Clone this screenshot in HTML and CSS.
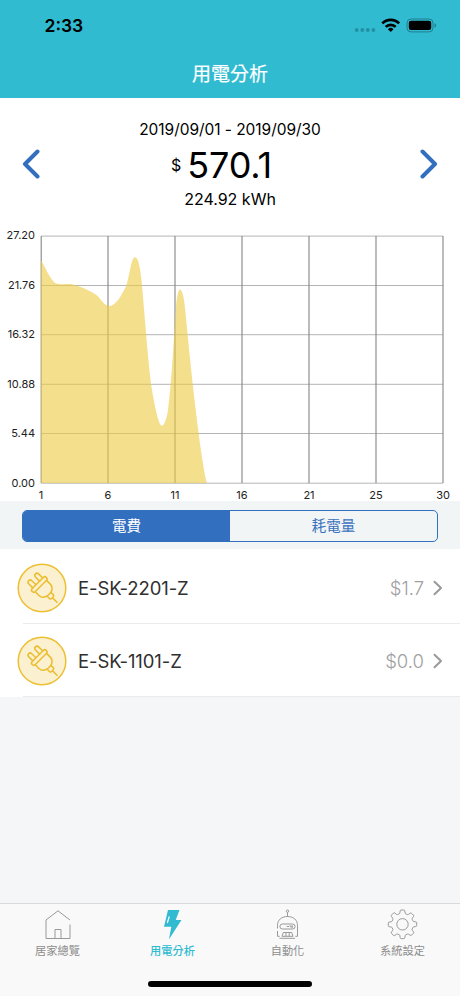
FILE: index.html
```html
<!DOCTYPE html>
<html lang="zh-Hant">
<head>
<meta charset="utf-8">
<title>用電分析</title>
<link rel="stylesheet" href="styles.css">
</head>
<body>
<svg class="defs" aria-hidden="true">
  <symbol id="plug" viewBox="0 0 50 50">
    <circle cx="25" cy="25" r="23.800" fill="#fbf1d0" stroke="#edbf33" stroke-width="1.500"/>
    <g fill="none" stroke="#ebbd2f" stroke-width="1.500" stroke-linejoin="round" stroke-linecap="round" transform="translate(22.300 21.500) rotate(-45)">
      <rect x="-10" y="-2.200" width="20" height="4.400" rx="2.200"/>
      <path d="M-7-2.200V-8a2.200 2.200 0 0 1 4.400 0V-2.200M2.600-2.200V-8A2.200 2.200 0 0 1 7-8V-2.200"/>
      <path d="M-8 2.200V7.500C-8 11-5 13.500-2.400 13.800H2.400C5 13.500 8 11 8 7.500V2.200"/>
      <path d="M-2.700 13.800v3.200q0 1.600 1.500 1.600h2.400q1.500 0 1.500-1.600V13.800M0 18.600V25"/>
    </g>
  </symbol>
</svg>
<div class="screen">
  <header class="header">
    <div class="status">
      <span class="time">2:33</span>
      <svg class="status-icons" width="84" height="18" viewBox="0 0 84 18">
        <g fill="#2390a2"><circle cx="2.700" cy="14" r="1.900"/><circle cx="8.300" cy="14" r="1.900"/><circle cx="13.800" cy="14" r="1.900"/><circle cx="19.400" cy="14" r="1.900"/></g>
        <g fill="none" stroke="#000" stroke-width="2.700">
          <path d="M28.300 7.400a11.800 11.800 0 0 1 16.800 0"/>
          <path d="M31.700 10.900a7 7 0 0 1 10 0"/>
        </g>
        <path d="M33.900 13.200a4 4 0 0 1 5.600 0L36.700 16z"/>
        <rect x="53" y="3" width="26" height="12.900" rx="4" fill="none" stroke="#1e7f8e"/>
        <rect x="54.800" y="4.800" width="22.400" height="9.300" rx="2.300"/>
        <path d="M80.500 7.300v4.200q1.600-.6 1.600-2.100t-1.600-2.100z" fill="#1e7f8e"/>
      </svg>
    </div>
    <h1 class="title">用電分析</h1>
  </header>

  <section class="summary">
    <svg class="arrow" width="18" height="30" viewBox="0 0 18 30"><path d="M15.500 2.500 3 15l12.500 12.500"/></svg>
    <div class="totals">
      <div class="range">2019/09/01 - 2019/09/30</div>
      <div class="cost"><span class="currency">$</span><span class="amount">570.1</span></div>
      <div class="energy">224.92 kWh</div>
    </div>
    <svg class="arrow" width="18" height="30" viewBox="0 0 18 30"><path d="M2.500 2.500 15 15 2.500 27.500"/></svg>
  </section>

  <svg class="chart" width="460" height="281" viewBox="0 220 460 281">
    <path d="M41 236.100H443M41 285.500H443M41 334.700H443M41 384.300H443M41 433.500H443M41 483.200H443" stroke="#b5b5b5"/>
    <path d="M41.200 236V483M108 236V483M175 236V483M242 236V483M309 236V483M376 236V483M443 236V483" stroke="#858585" stroke-width="1.100"/>
    <path class="area" d="M41 483V260C46 269 50 279 55.500 283.300C61 285 67 283.500 72 284.200C80 286 89 290 96.500 295C101 299 104 306 109.500 306C116 305.500 121 296 126 286.500C130 275 131 257.300 135 257.300C138.500 257.300 140 268 141.500 280C144.500 312 147 350 151 384C153.500 399 158 425.700 162 425.700C164.500 425.500 167 417 168 410C171.500 385 174 335 176.300 303C177.300 295 178.500 289.500 180 289.500C182.500 290 184 298 185 308C187.500 333 190 360 192.700 384C196 413 202 464 206.800 483Z"/>
    <g class="axis" text-anchor="end">
      <text x="35" y="239.300">27.20</text><text x="35" y="288.600">21.76</text><text x="35" y="338.200">16.32</text><text x="35" y="387.600">10.88</text><text x="35" y="437">5.44</text><text x="35" y="486.500">0.00</text>
    </g>
    <g class="axis" text-anchor="middle">
      <text x="41" y="498.500">1</text><text x="108" y="498.500">6</text><text x="175" y="498.500">11</text><text x="242" y="498.500">16</text><text x="309" y="498.500">21</text><text x="376" y="498.500">25</text><text x="443" y="498.500">30</text>
    </g>
  </svg>

  <div class="segment-band">
    <div class="segments">
      <div class="segment selected">電費</div>
      <div class="segment">耗電量</div>
    </div>
  </div>

  <ul class="devices">
    <li class="device">
      <svg class="device-icon"><use href="#plug"/></svg>
      <span class="name">E-SK-2201-Z</span>
      <span class="price">$1.7</span>
      <svg class="more" width="10" height="16" viewBox="0 0 10 16"><path d="M1.500 1.800 8 8l-6.500 6.200"/></svg>
    </li>
    <li class="device">
      <svg class="device-icon"><use href="#plug"/></svg>
      <span class="name">E-SK-1101-Z</span>
      <span class="price">$0.0</span>
      <svg class="more" width="10" height="16" viewBox="0 0 10 16"><path d="M1.500 1.800 8 8l-6.500 6.200"/></svg>
    </li>
  </ul>

  <nav class="tabs">
    <div class="tab">
      <svg width="32" height="32" viewBox="0 0 32 32"><path d="M28 12 16 2.800 4 12V30.500H28V16.500M13 30.500V21.500h6v9"/></svg>
      <span>居家總覽</span>
    </div>
    <div class="tab active">
      <svg width="32" height="32" viewBox="0 0 32 32"><path class="bolt" d="M11 2H22.500L18.700 12H24.500L12 31.300 14.300 18.700H7z"/><path class="shine" d="m12.300 8.500-2 6.500"/></svg>
      <span>用電分析</span>
    </div>
    <div class="tab">
      <svg width="32" height="32" viewBox="0 0 32 32"><circle cx="15.500" cy="3.200" r="1.200"/><path d="M15.500 4.500V8.500M5.500 20.500V17.500C5.500 12 9.500 8.500 15.500 8.500S25.500 12 25.500 17.500V28.300H23.300M5.500 23V28.300H7.700M7.500 30.300H23M10 28.300 11.300 24.500h8.400l1.300 3.800zM14 28.300v-3.500M17.200 28.300v-3.500"/><rect x="7.900" y="16" width="15.200" height="5" rx="2.500"/><path d="M14.700 18.500h2.300M18.200 17.200v1.600h2M20.200 17.200v3"/></svg>
      <span>自動化</span>
    </div>
    <div class="tab">
      <svg width="32" height="32" viewBox="0 0 32 32"><g transform="translate(-.5 .3)"><circle cx="16" cy="16" r="5.700"/><path stroke-linejoin="round" d="M14.700 1.700h2.600q.9 0 1 .9l.4 2.200q.1.600.7.800l1.500.6q.6.300 1.100-.1l1.600-1.200q.8-.6 1.500.1l1.800 1.800q.7.700.1 1.500l-1.200 1.600q-.4.500-.1 1.100l.6 1.500q.2.600.8.700l2.200.4q.9.100.9 1v2.600q0 .9-.9 1l-2.200.4q-.6.100-.8.700l-.6 1.500q-.3.600.1 1.100l1.200 1.600q.6.800-.1 1.500l-1.800 1.800q-.7.700-1.500.1L22 25.900q-.5-.4-1.100-.1l-1.500.6q-.6.200-.7.800l-.4 2.200q-.1.900-1 .9h-2.600q-.9 0-1-.9l-.4-2.200q-.1-.6-.7-.8l-1.500-.6q-.6-.3-1.100.1l-1.600 1.200q-.8.600-1.500-.1l-1.800-1.800q-.7-.7-.1-1.500l1.200-1.600q.4-.5.1-1.100l-.6-1.500q-.2-.6-.8-.7l-2.200-.4q-.9-.1-.9-1v-2.600q0-.9.900-1l2.200-.4q.6-.1.800-.7l.6-1.500q.3-.6-.1-1.100L5 8.100q-.6-.8.100-1.500l1.800-1.800q.7-.7 1.500-.1L10 6.100q.5.400 1.100.1l1.500-.6q.6-.2.700-.8l.4-2.200q.1-.9 1-.9z"/></g></svg>
      <span>系統設定</span>
    </div>
    <div class="home-bar"></div>
  </nav>
</div>
</body>
</html>
```
FILE: styles.css
```css
* { box-sizing: border-box; }
body { margin: 0; font-family: Inter, "Noto Sans CJK TC", sans-serif; color: #000; }
.defs { display: none; }
.screen { width: 460px; height: 996px; display: flex; flex-direction: column; background: #f4f6f8; overflow: hidden; }

.header { height: 98px; flex: none; background: #30bbd1; display: flex; flex-direction: column; }
.status { height: 50px; padding: 16px 22px 0 44.500px; display: flex; justify-content: space-between; align-items: flex-start; }
.time { font-size: 17.500px; line-height: 20px; font-weight: 600; }
.title { margin: 12px 0 0; text-align: center; color: #fff; font-size: 19px; line-height: 26px; font-weight: 400; -webkit-text-stroke: .2px #fff; }

.summary { height: 122px; flex: none; background: #fff; padding: 0 22px; display: flex; justify-content: space-between; }
.arrow { margin-top: 51px; fill: none; stroke: #326fbf; stroke-width: 4; stroke-linecap: round; stroke-linejoin: round; }
.totals { display: flex; flex-direction: column; align-items: center; padding-top: 21px; }
.range { font-size: 15.500px; line-height: 22px; letter-spacing: -.05px; }
.cost { height: 47px; display: flex; align-items: center; gap: 6px; padding-right: 17px; }
.currency { font-size: 16px; }
.amount { font-size: 36px; letter-spacing: -.1px; }
.energy { font-size: 16px; line-height: 22px; }

.chart { display: block; flex: none; background: #fff; }
.area { fill: #edcb46; fill-opacity: .62; }
.axis { font-size: 11px; fill: #222; }

.segment-band { height: 48px; flex: none; padding: 9px 22px 7px; background: #f1f5f6; }
.segments { height: 32px; border: 1px solid #326fbf; border-radius: 5px; display: grid; grid-template-columns: 1fr 1fr; overflow: hidden; }
.segment { text-align: center; color: #3b72bd; font-size: 14.500px; line-height: 30px; }
.selected { background: #326fbf; color: #fff; }

.devices { list-style: none; margin: 0; padding: 0; background: #fff; }
.device { height: 75px; display: flex; align-items: center; padding: 2px 17px 0 17px; background: linear-gradient(#e9ebed, #e9ebed) 23px 100% / 437px 1px no-repeat; }
.device + .device { height: 73px; padding-top: 0; }
.device-icon { width: 50px; height: 50px; }
.name { margin-left: 11px; padding-top: 1px; flex: 1; font-size: 18.500px; color: #303030; letter-spacing: -.1px; }
.price { font-size: 18.500px; font-weight: 300; color: #a0a0a0; margin-right: 9px; }
.more { fill: none; stroke: #999; stroke-width: 2; stroke-linecap: round; stroke-linejoin: round; }

.tabs { position: relative; height: 93px; margin-top: auto; border-top: 1px solid #d8dbde; background: #f9f9f9; display: grid; grid-template-columns: repeat(4, 115px); padding-top: 4px; }
.tab { display: flex; flex-direction: column; align-items: center; color: #8c8c8c; font-size: 11.200px; line-height: 16px; font-weight: 400; gap: 3px; }
.tab svg { fill: none; stroke: #999; stroke-width: 1; }
.tab.active { color: #30bbd1; font-weight: 500; }
.tab .bolt { fill: #30bbd1; stroke: none; }
.tab .shine { stroke: #fff; stroke-width: 1.200; }
.home-bar { position: absolute; left: 148px; bottom: 9px; width: 164px; height: 6px; border-radius: 3px; background: #000; }
```
